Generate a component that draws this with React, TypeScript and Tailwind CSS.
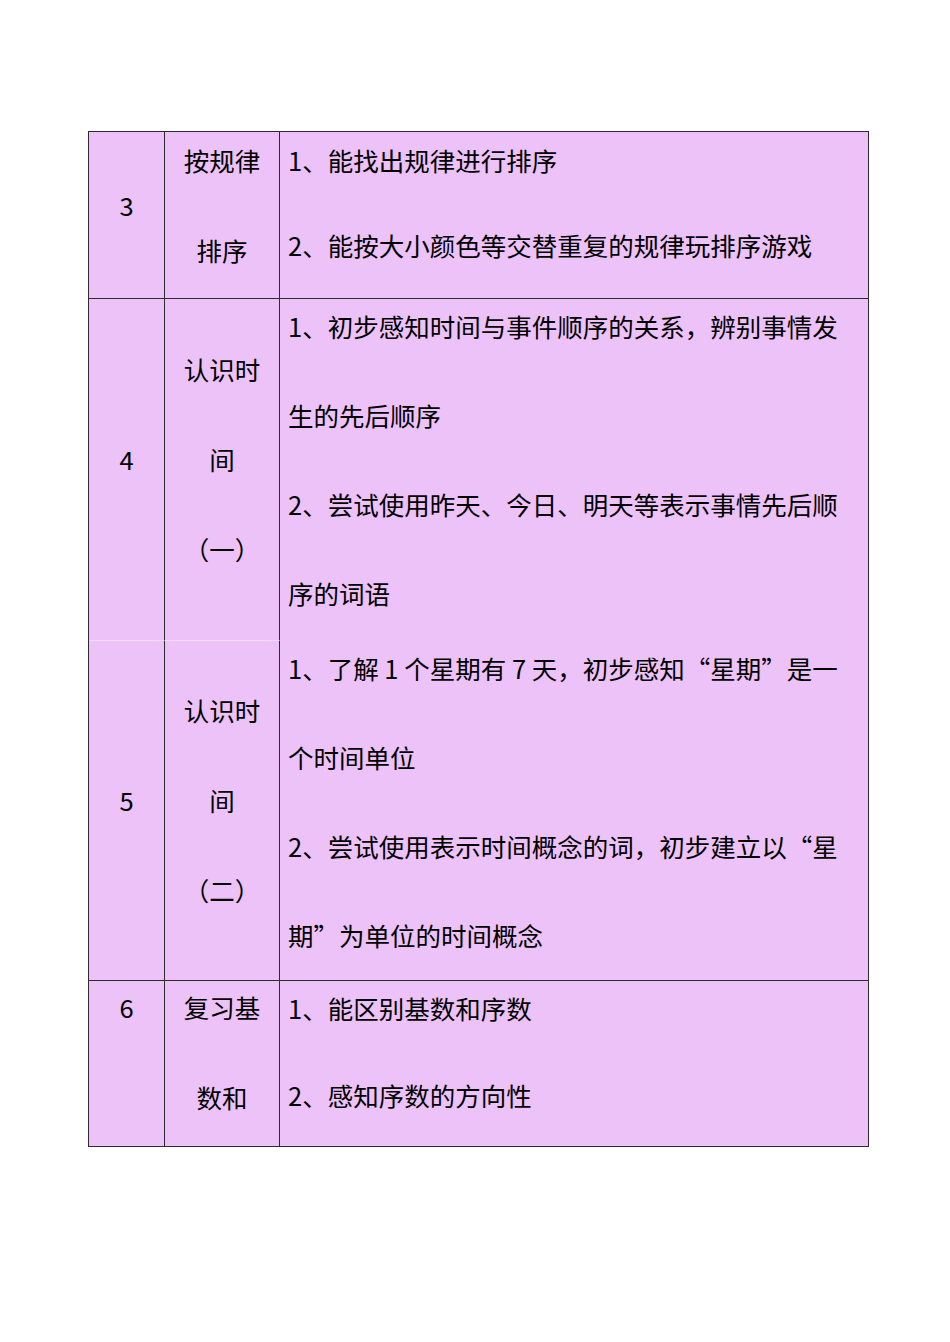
import React from "react";

const font = { fontFamily: '"Noto Sans CJK SC", "Noto Sans", sans-serif' };

function L({ children }: { children: React.ReactNode }) {
  return <div className="h-[36px] leading-[36px] whitespace-nowrap">{children}</div>;
}

export default function App() {
  return (
    <div className="w-[950px] h-[1342px] bg-white text-[25.5px] text-black" style={font}>
      <div className="pt-[131px] pl-[88px]">
        <div className="w-[781px] border border-[#2e2a30] bg-[#ecc2f8] flex flex-col">
          {/* Row 3 */}
          <div className="flex h-[167px] border-b border-[#2e2a30]">
            <div className="w-[76px] border-r border-[#2e2a30] flex flex-col items-center pt-[55px]">
              <L>3</L>
            </div>
            <div className="w-[115px] border-r border-[#2e2a30] flex flex-col items-center pt-[10px] gap-[54px]">
              <L>按规律</L>
              <L>排序</L>
            </div>
            <div className="flex-1 flex flex-col pl-[8px] pt-[10px] gap-[49px]">
              <L>1、能找出规律进行排序</L>
              <L>2、能按大小颜色等交替重复的规律玩排序游戏</L>
            </div>
          </div>
          {/* Row 4 */}
          <div className="flex h-[342px]">
            <div className="w-[76px] border-r border-b border-r-[#2e2a30] border-b-[#f4dafa] flex flex-col items-center pt-[142px]">
              <L>4</L>
            </div>
            <div className="w-[115px] border-r border-b border-r-[#2e2a30] border-b-[#f4dafa] flex flex-col items-center pt-[52px] gap-[54px]">
              <L>认识时</L>
              <L>间</L>
              <L>（一）</L>
            </div>
            <div className="flex-1 flex flex-col pl-[8px] pt-[9px] gap-[53px]">
              <L>1、初步感知时间与事件顺序的关系，辨别事情发</L>
              <L>生的先后顺序</L>
              <L>2、尝试使用昨天、今日、明天等表示事情先后顺</L>
              <L>序的词语</L>
            </div>
          </div>
          {/* Row 5 */}
          <div className="flex h-[340px] border-b border-[#2e2a30]">
            <div className="w-[76px] border-r border-[#2e2a30] flex flex-col items-center pt-[141px]">
              <L>5</L>
            </div>
            <div className="w-[115px] border-r border-[#2e2a30] flex flex-col items-center pt-[51px] gap-[54px]">
              <L>认识时</L>
              <L>间</L>
              <L>（二）</L>
            </div>
            <div className="flex-1 flex flex-col pl-[8px] pt-[9px] gap-[53px]">
              <L>1、了解 1 个星期有 7 天，初步感知“星期”是一</L>
              <L>个时间单位</L>
              <L>2、尝试使用表示时间概念的词，初步建立以“星</L>
              <L>期”为单位的时间概念</L>
            </div>
          </div>
          {/* Row 6 */}
          <div className="flex h-[165px]">
            <div className="w-[76px] border-r border-[#2e2a30] flex flex-col items-center pt-[8px]">
              <L>6</L>
            </div>
            <div className="w-[115px] border-r border-[#2e2a30] flex flex-col items-center pt-[8px] gap-[54px]">
              <L>复习基</L>
              <L>数和</L>
            </div>
            <div className="flex-1 flex flex-col pl-[8px] pt-[9px] gap-[51px]">
              <L>1、能区别基数和序数</L>
              <L>2、感知序数的方向性</L>
            </div>
          </div>
        </div>
      </div>
    </div>
  );
}
